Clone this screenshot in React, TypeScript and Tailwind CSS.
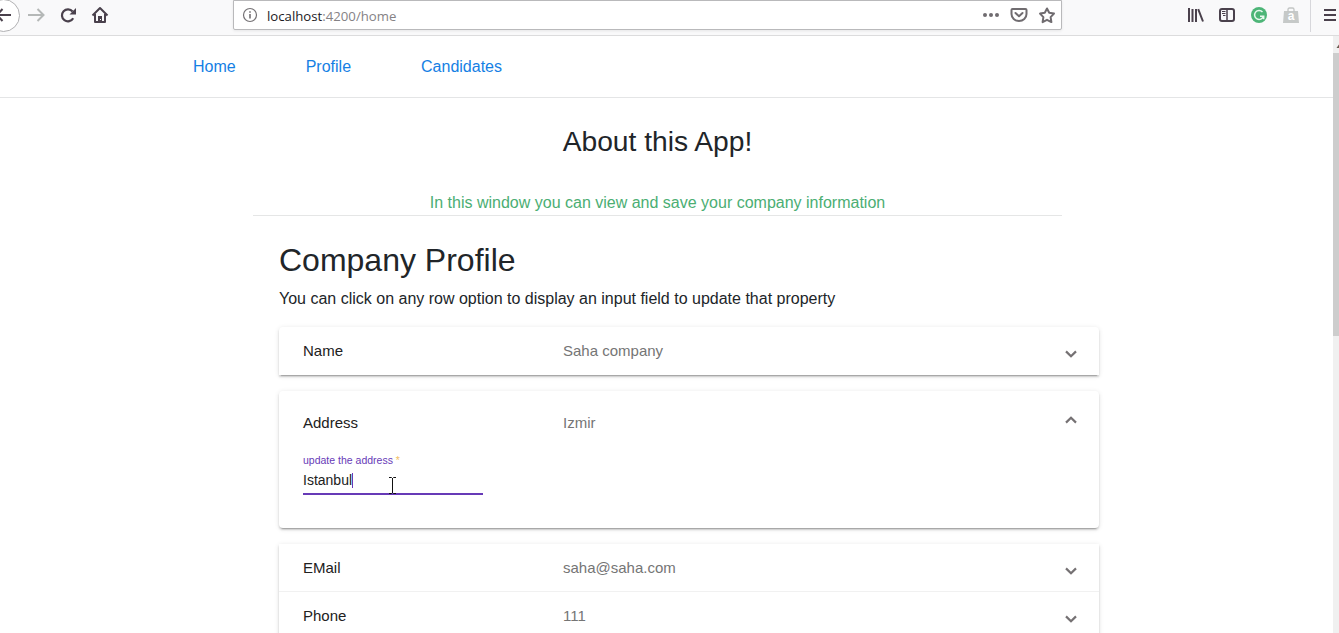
import type { ReactNode } from "react";

function Chevron({ up = false }: { up?: boolean }) {
  return (
    <svg width="12" height="8" viewBox="0 0 12 8" fill="none" stroke="#757173" strokeWidth="2.200" className={up ? "mt-[-6px]" : "mt-[6px]"}>
      <path d={up ? "M1 6.600 6 1.700l5 4.900" : "M1 1.400 6 6.300l5-4.900"} />
    </svg>
  );
}

function Row({ label, value, open = false }: { label: string; value: string; open?: boolean }) {
  return (
    <div className={`flex items-center pl-6 pr-[22px] text-[15px] ${open ? "h-16" : "h-12"}`}>
      <span className="w-[260px] shrink-0 text-[#212121]">{label}</span>
      <span className="grow text-[#757575]">{value}</span>
      <Chevron up={open} />
    </div>
  );
}

function Panel({ children, className = "" }: { children: ReactNode; className?: string }) {
  return (
    <section
      className={`bg-white shadow-[0_3px_1px_-2px_rgba(0,0,0,0.2),0_2px_2px_0_rgba(0,0,0,0.14),0_1px_5px_0_rgba(0,0,0,0.12)] ${className}`}
    >
      {children}
    </section>
  );
}

function Toolbar() {
  return (
    <header className="flex h-9 shrink-0 items-start border-b border-[#dcdcdd] bg-[#f9f9fa]">
      <svg width="233" height="32" viewBox="0 0 233 32" fill="none" className="shrink-0">
        <circle cx="3.5" cy="15.5" r="16" fill="#fff" stroke="#b1b1b3" />
        <path d="M11 15H-3M2.500 9-3 15l5.500 6" stroke="#4a414c" strokeWidth="2" />
        <path d="M28 15h15M37.500 9l6 6-6 6" stroke="#b5b8b7" strokeWidth="2" />
        <path d="M73.200 18.200a6 6 0 1 1-.6-6.700" stroke="#4a414c" strokeWidth="2.200" />
        <path d="M76 8v6.500h-6.500z" fill="#4a414c" />
        <path d="M92.500 15.500 100 8l7.500 7.500M95 14v8h10v-8" stroke="#4a414c" strokeWidth="2" strokeLinejoin="round" />
        <path d="M98 16h4v6h-4z" fill="#4a414c" />
        <path d="M100 19h1v1h-1z" fill="#fff" />
      </svg>
      <div className="flex h-[30px] w-[829px] shrink-0 items-center rounded-b-[2px] border border-[#b9b9bb] bg-white pl-2 shadow-[0_1px_3px_rgba(0,0,0,0.08)]">
        <svg width="16" height="16" viewBox="0 0 16 16" fill="none" className="shrink-0">
          <circle cx="8" cy="8" r="6.500" stroke="#737073" strokeWidth="1.200" />
          <path d="M8 7v4.500M8 4.200v1.600" stroke="#737073" strokeWidth="1.600" />
        </svg>
        <span className="ml-[9px] mt-[2px] grow whitespace-nowrap font-['Open_Sans','Noto_Sans',sans-serif] text-[13.200px] leading-[20px] text-[#858285]">
          <span className="text-[#1c1a1e]">localhost</span>:4200/home
        </span>
        <svg width="79" height="28" viewBox="0 0 79 28" fill="none" className="shrink-0">
          <g fill="#706c70">
            <circle cx="3" cy="14" r="2" />
            <circle cx="9" cy="14" r="2" />
            <circle cx="15" cy="14" r="2" />
          </g>
          <path d="M30.500 8h13q1 0 1 1v4a7.500 7 0 0 1-15 0V9q0-1 1-1z" stroke="#706c70" strokeWidth="2" />
          <path d="m33.500 12 3.500 3.300 3.500-3.300" stroke="#706c70" strokeWidth="2" strokeLinecap="round" strokeLinejoin="round" />
          <path d="m65 7.500 2.200 4.300 4.800.8-3.400 3.500.8 5-4.400-2.300-4.400 2.300.8-5-3.400-3.500 4.800-.8z" stroke="#706c70" strokeWidth="2" strokeLinejoin="round" />
        </svg>
      </div>
      <svg width="159" height="32" viewBox="0 0 159 32" fill="none" className="ml-auto shrink-0">
        <path d="M9 8v14M12.500 9v13M16 9v13M18.200 9.200 23 21.500" stroke="#4a414c" strokeWidth="2" />
        <rect x="40" y="9" width="14" height="12" rx="2" stroke="#4a414c" strokeWidth="2" />
        <path d="M47 9v12" stroke="#4a414c" strokeWidth="1.500" />
        <path d="M42 11.500h3.500M42 13.500h3.500M43 15.500h2.500" stroke="#4a414c" strokeWidth="1" />
        <circle cx="79" cy="15" r="8" fill="#4db577" />
        <path d="M82.500 12A4.500 4.500 0 1 0 83.400 16.300H80M83.700 15.500v3.800" stroke="#e8f8ee" strokeWidth="1.500" />
        <path d="M104 11h14l1 12h-16z" fill="#c6c9c8" />
        <path d="M108 12V9.500q0-1.500 1.500-1.500h3q1.500 0 1.500 1.500V12" stroke="#c2c5c4" strokeWidth="1.300" />
        <text x="111" y="20" textAnchor="middle" fontSize="12" fontWeight="700" fill="#fff">a</text>
        <path d="M130.500 0v32" stroke="#d7d7db" />
        <path d="M144 10h12M144 15h12M144 20h12" stroke="#4a414c" strokeWidth="2" />
      </svg>
    </header>
  );
}

export default function App() {
  return (
    <div className="flex h-[633px] w-[1339px] flex-col overflow-hidden bg-white font-['Liberation_Sans',Arial,sans-serif] text-[#212529]">
      <Toolbar />
      <div className="flex min-h-0 grow">
        <main className="flex min-w-0 grow flex-col">
          <nav className="flex h-[62px] shrink-0 items-center gap-[70px] border-b border-[#e4e5e6] pl-[193px] text-base leading-6 text-[#1580e4]">
            <a>Home</a>
            <a>Profile</a>
            <a>Candidates</a>
          </nav>
          <div className="ml-[253px] flex h-[118px] w-[809px] shrink-0 flex-col items-center border-b border-[#e5e6e6] pt-[26px]">
            <h2 className="text-[28.200px] leading-[34px]">About this App!</h2>
            <p className="mt-[33px] text-base leading-6 text-[#4bae73]">In this window you can view and save your company information</p>
          </div>
          <div className="ml-[279px] w-[820px] pt-6">
            <h1 className="text-[32px] leading-[40px]">Company Profile</h1>
            <p className="mt-[7px] text-base leading-6">You can click on any row option to display an input field to update that property</p>
            <Panel className="mt-4 rounded-t">
              <Row label="Name" value="Saha company" />
            </Panel>
            <Panel className="mt-4 h-[137px] rounded">
              <Row label="Address" value="Izmir" open />
              <div className="relative ml-6 flex h-10 w-[180px] flex-col border-b-2 border-[#673ab7]">
                <label className="-mt-px text-[10.500px] leading-[12px] text-[#673ab7]">
                  update the address <span className="text-[#f3c064]">*</span>
                </label>
                <div className="mt-[6px] flex items-center text-[14px] leading-[16px] text-[#212121]">
                  Istanbul
                  <span className="h-[15px] w-px bg-[#673ab7]" />
                </div>
                <svg width="9" height="17" viewBox="0 0 9 17" fill="none" stroke="#111" className="absolute left-[85px] top-[22px]">
                  <path d="M1 .5h2.500l1 1 1-1H8M4.500 1v15M1 16.500h2.500l1-1 1 1H8" />
                </svg>
              </div>
            </Panel>
            <Panel className="mt-4">
              <Row label="EMail" value="saha@saha.com" />
              <div className="-mt-px border-t border-[#f1f1f1]">
                <Row label="Phone" value="111" />
              </div>
            </Panel>
          </div>
        </main>
        <aside className="flex w-[6px] shrink-0 flex-col overflow-hidden bg-[#f0f0f0]">
          <svg width="6" height="17" viewBox="0 0 6 17" className="shrink-0">
            <path d="M3.500 12 6 8.500V12z" fill="#6b5d50" />
          </svg>
          <div className="h-[283px] bg-[#cdcdcd]" />
        </aside>
      </div>
    </div>
  );
}
